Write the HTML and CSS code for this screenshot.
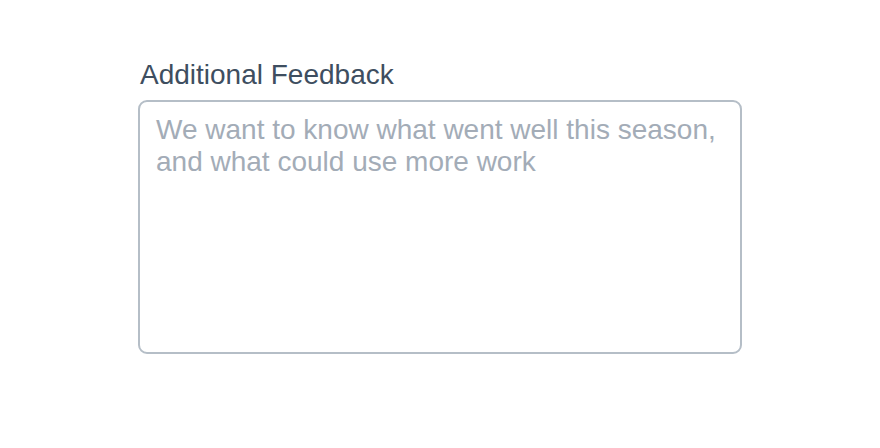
FILE: index.html
```html
<!DOCTYPE html>
<html lang="en">
<head>
  <meta charset="UTF-8">
  <title>Additional Feedback</title>
  <link rel="stylesheet" href="styles.css">
</head>
<body>
  <div class="field">
    <label class="field-label" for="feedback">Additional Feedback</label>
    <textarea id="feedback" class="field-input" placeholder="We want to know what went well this season, and what could use more work"></textarea>
  </div>
</body>
</html>
```

FILE: styles.css
```css
body {
  margin: 0;
  font-family: "Liberation Sans", Arial, sans-serif;
  background: #fff;
}
.field {
  width: 604px;
  margin: 58px 0 0 138px;
  display: flex;
  flex-direction: column;
}
.field-label {
  font-size: 28px;
  line-height: 34px;
  color: #3e4e60;
  padding-left: 2px;
  margin-bottom: 8px;
}
.field-input {
  box-sizing: border-box;
  width: 604px;
  height: 254px;
  margin: 0;
  padding: 12px 16px;
  border: 2px solid #b5bec7;
  border-radius: 9px;
  font-family: "Liberation Sans", Arial, sans-serif;
  font-size: 28px;
  line-height: 32px;
  color: #3e4e60;
  resize: none;
  outline: none;
}
.field-input::placeholder {
  color: #a3acb7;
}
```
